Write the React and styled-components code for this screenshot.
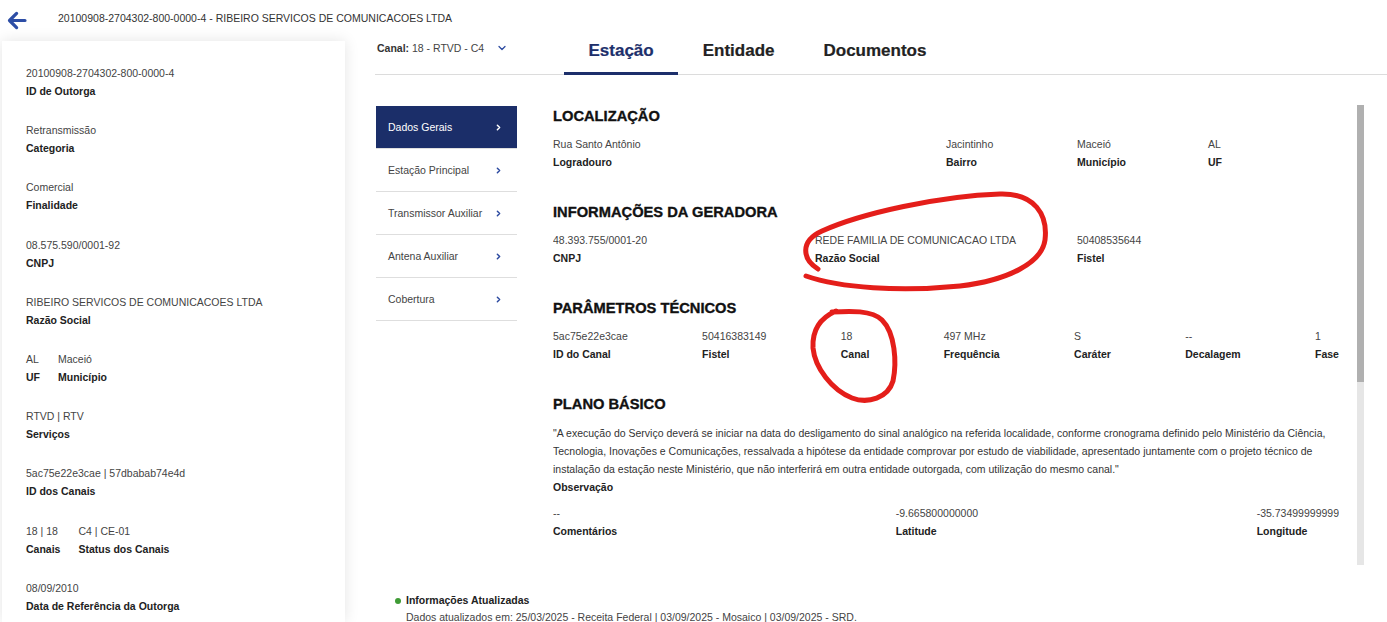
import React from 'react'
import styled, { createGlobalStyle } from 'styled-components'
import { ChevronDown, ChevronRight } from 'lucide-react'

const GlobalStyle = createGlobalStyle`
  * { box-sizing: border-box; }
  body {
    margin: 0;
    background: #fff;
    color: #333;
    font-family: "Liberation Sans", Arial, sans-serif;
    font-size: 10.5px;
    overflow: hidden;
  }
`

const Page = styled.div`
  position: relative;
  width: 100%;
  height: 622px;
  overflow: hidden;
`

const Header = styled.header`
  height: 40px;
  display: flex;
  align-items: center;
  padding-left: 7px;
  gap: 31px;
`

const BackButton = styled.button`
  border: 0;
  background: none;
  padding: 0;
  width: 20px;
  height: 19px;
  display: flex;
  cursor: pointer;
`

const Title = styled.h1`
  margin: 0;
  font-size: 10.5px;
  font-weight: 400;
  color: #333;
  line-height: 18px;
  padding-bottom: 4px;
`

const Body = styled.div`
  display: flex;
  height: 582px;
`

const SideCard = styled.aside`
  flex: 0 0 343px;
  margin-left: 2px;
  margin-top: 1px;
  background: #fff;
  box-shadow: 0 0 14px rgba(0, 0, 0, 0.11);
  padding: 23px 24px;
  position: relative;
  z-index: 1;
`

const CardItem = styled.div`
  display: flex;
  gap: 18px;
  margin-bottom: 21.2px;
`

const Field = styled.div`
  display: flex;
  flex-direction: column;
`

const Value = styled.span`
  color: #444;
  line-height: ${p => p.$lh || 18}px;
  white-space: nowrap;
`

const Label = styled.span`
  font-weight: 700;
  color: #222;
  line-height: 18px;
  white-space: nowrap;
`

const Main = styled.main`
  flex: 1;
  display: flex;
  flex-direction: column;
  padding-left: 30px;
  min-width: 0;
`

const TopBar = styled.div`
  display: flex;
  align-items: flex-start;
  height: 35px;
  border-bottom: 1px solid #dcdcdc;
`

const CanalSelect = styled.div`
  flex: 0 0 189px;
  display: flex;
  align-items: center;
  gap: 12px;
  padding-left: 2px;
  line-height: 16px;
  font-size: 10.5px;
  color: #444;
  b { color: #333; }
`

const Tabs = styled.nav`
  display: flex;
`

const Tab = styled.div`
  padding: 0 24.5px 10px;
  height: 35px;
  line-height: 22px;
  font-size: 17px;
  font-weight: 700;
  color: ${p => (p.$active ? '#1d2f6b' : '#222')};
  border-bottom: 3px solid ${p => (p.$active ? '#1d2f6b' : 'transparent')};
  -webkit-text-stroke: 0.2px currentColor;
`

const MainRow = styled.div`
  display: flex;
  margin-top: 30px;
  padding-right: 23px;
  height: 460px;
`

const Menu = styled.ul`
  list-style: none;
  margin: 1px 0 0 1px;
  padding: 0;
  flex: 0 0 141px;
  align-self: flex-start;
`

const MenuItem = styled.li`
  height: 43px;
  display: flex;
  align-items: center;
  justify-content: space-between;
  padding: 0 14px 0 12px;
  border-bottom: 1px solid #dedede;
  background: ${p => (p.$active ? '#1b2e69' : '#fff')};
  color: ${p => (p.$active ? '#fff' : '#444')};
  white-space: nowrap;
  svg { color: ${p => (p.$active ? '#fff' : '#2c4aa0')}; }
`

const Content = styled.section`
  flex: 0 0 786px;
  margin-left: 36px;
  overflow: hidden;
  padding-top: 1px;
`

const SectionTitle = styled.h2`
  margin: 0 0 10px;
  font-size: 14.7px;
  line-height: 20px;
  font-weight: 700;
  color: #111;
  -webkit-text-stroke: 0.35px #111;
`

const Section = styled.div`
  margin-bottom: 31px;
`

const Grid = styled.div`
  display: grid;
  grid-template-columns: repeat(6, 1fr);
`

const Cell = styled(Field)`
  grid-column: span ${p => p.$span || 1};
`

const Spread = styled.div`
  display: flex;
  justify-content: space-between;
  margin-top: ${p => p.$mt || 0}px;
`

const Paragraph = styled.p`
  margin: 0;
  line-height: 18px;
  color: #333;
`

const Scrollbar = styled.div`
  flex: 0 0 7px;
  margin-left: 18px;
  background: #e6e6e6;
  display: flex;
  flex-direction: column;
`

const Thumb = styled.div`
  background: #b0b0b0;
`

const Footer = styled.footer`
  margin-top: 27px;
  padding-left: 20px;
  line-height: 17px;
`

const Status = styled.div`
  display: flex;
  align-items: center;
  gap: 5px;
  font-weight: 700;
  color: #222;
  &::before {
    content: '';
    width: 6px;
    height: 6px;
    border-radius: 50%;
    background: #3f9b35;
  }
`

const Note = styled.div`
  padding-left: 11px;
  color: #444;
`

const Marks = styled.svg`
  position: absolute;
  left: 0;
  top: 0;
  pointer-events: none;
  z-index: 5;
`

const sideData = [
  [['20100908-2704302-800-0000-4', 'ID de Outorga']],
  [['Retransmissão', 'Categoria']],
  [['Comercial', 'Finalidade']],
  [['08.575.590/0001-92', 'CNPJ']],
  [['RIBEIRO SERVICOS DE COMUNICACOES LTDA', 'Razão Social']],
  [['AL', 'UF'], ['Maceió', 'Município']],
  [['RTVD | RTV', 'Serviços']],
  [['5ac75e22e3cae | 57dbabab74e4d', 'ID dos Canais']],
  [['18 | 18', 'Canais'], ['C4 | CE-01', 'Status dos Canais']],
  [['08/09/2010', 'Data de Referência da Outorga']],
]

const menu = ['Dados Gerais', 'Estação Principal', 'Transmissor Auxiliar', 'Antena Auxiliar', 'Cobertura']

const localizacao = [
  ['Rua Santo Antônio', 'Logradouro', 3],
  ['Jacintinho', 'Bairro', 1],
  ['Maceió', 'Município', 1],
  ['AL', 'UF', 1],
]

const geradora = [
  ['48.393.755/0001-20', 'CNPJ'],
  ['REDE FAMILIA DE COMUNICACAO LTDA', 'Razão Social'],
  ['50408535644', 'Fistel'],
]

const parametros = [
  ['5ac75e22e3cae', 'ID do Canal'],
  ['50416383149', 'Fistel'],
  ['18', 'Canal'],
  ['497 MHz', 'Frequência'],
  ['S', 'Caráter'],
  ['--', 'Decalagem'],
  ['1', 'Fase'],
]

const coords = [
  ['--', 'Comentários'],
  ['-9.665800000000', 'Latitude'],
  ['-35.73499999999', 'Longitude'],
]

const FieldPair = ({ v, l }) => (
  <Field>
    <Value $lh={17}>{v}</Value>
    <Label>{l}</Label>
  </Field>
)

export default function App() {
  return (
    <Page>
      <GlobalStyle />
      <Header>
        <BackButton aria-label="Voltar">
          <svg width="20" height="19" viewBox="0 0 20 19" fill="none" stroke="#2d4ea6" strokeWidth="3.2" strokeLinecap="round" strokeLinejoin="round">
            <path d="M18 9.5H2.8M9.6 2.4L2.5 9.5 9.6 16.6" />
          </svg>
        </BackButton>
        <Title>20100908-2704302-800-0000-4 - RIBEIRO SERVICOS DE COMUNICACOES LTDA</Title>
      </Header>
      <Body>
        <SideCard>
          {sideData.map((item, i) => (
            <CardItem key={i}>
              {item.map(([v, l]) => (
                <Field key={l}>
                  <Value>{v}</Value>
                  <Label>{l}</Label>
                </Field>
              ))}
            </CardItem>
          ))}
        </SideCard>
        <Main>
          <TopBar>
            <CanalSelect>
              <span><b>Canal:</b> 18 - RTVD - C4</span>
              <ChevronDown size={12} strokeWidth={2.5} color="#2c4aa0" />
            </CanalSelect>
            <Tabs>
              <Tab $active>Estação</Tab>
              <Tab>Entidade</Tab>
              <Tab>Documentos</Tab>
            </Tabs>
          </TopBar>
          <MainRow>
            <Menu>
              {menu.map((m, i) => (
                <MenuItem key={m} $active={i === 0}>
                  {m}
                  <ChevronRight size={9} strokeWidth={4} />
                </MenuItem>
              ))}
            </Menu>
            <Content>
              <Section>
                <SectionTitle>LOCALIZAÇÃO</SectionTitle>
                <Grid>
                  {localizacao.map(([v, l, s]) => (
                    <Cell key={l} $span={s}>
                      <Value $lh={17}>{v}</Value>
                      <Label>{l}</Label>
                    </Cell>
                  ))}
                </Grid>
              </Section>
              <Section>
                <SectionTitle>INFORMAÇÕES DA GERADORA</SectionTitle>
                <Grid>
                  {geradora.map(([v, l]) => (
                    <Cell key={l} $span={2}>
                      <Value $lh={17}>{v}</Value>
                      <Label>{l}</Label>
                    </Cell>
                  ))}
                </Grid>
              </Section>
              <Section>
                <SectionTitle>PARÂMETROS TÉCNICOS</SectionTitle>
                <Spread>
                  {parametros.map(([v, l]) => <FieldPair key={l} v={v} l={l} />)}
                </Spread>
              </Section>
              <Section>
                <SectionTitle>PLANO BÁSICO</SectionTitle>
                <Paragraph>
                  "A execução do Serviço deverá se iniciar na data do desligamento do sinal analógico na referida localidade, conforme cronograma definido pelo Ministério da Ciência, Tecnologia, Inovações e Comunicações, ressalvada a hipótese da entidade comprovar por estudo de viabilidade, apresentado juntamente com o projeto técnico de instalação da estação neste Ministério, que não interferirá em outra entidade outorgada, com utilização do mesmo canal."
                </Paragraph>
                <Label>Observação</Label>
                <Spread $mt={9}>
                  {coords.map(([v, l]) => <FieldPair key={l} v={v} l={l} />)}
                </Spread>
              </Section>
            </Content>
            <Scrollbar>
              <Thumb style={{ height: 277 }} />
            </Scrollbar>
          </MainRow>
          <Footer>
            <Status>Informações Atualizadas</Status>
            <Note>Dados atualizados em: 25/03/2025 - Receita Federal | 03/09/2025 - Mosaico | 03/09/2025 - SRD.</Note>
          </Footer>
        </Main>
      </Body>
      <Marks width="1387" height="622" viewBox="0 0 1387 622" fill="none" stroke="#e41e1a" strokeWidth="5" strokeLinecap="round" strokeLinejoin="round">
        <path d="M818 269C802 259 800 241 822 231C862 213 940 196 1000 194C1035 193 1048 215 1045 240C1042 262 1010 280 960 286C900 292 840 288 806 276" />
        <path d="M832 312C850 311 872 310 882 320C895 333 897 362 893 381C888 398 868 404 852 398C832 390 815 368 813 348C812 330 820 318 836 311" />
      </Marks>
    </Page>
  )
}
